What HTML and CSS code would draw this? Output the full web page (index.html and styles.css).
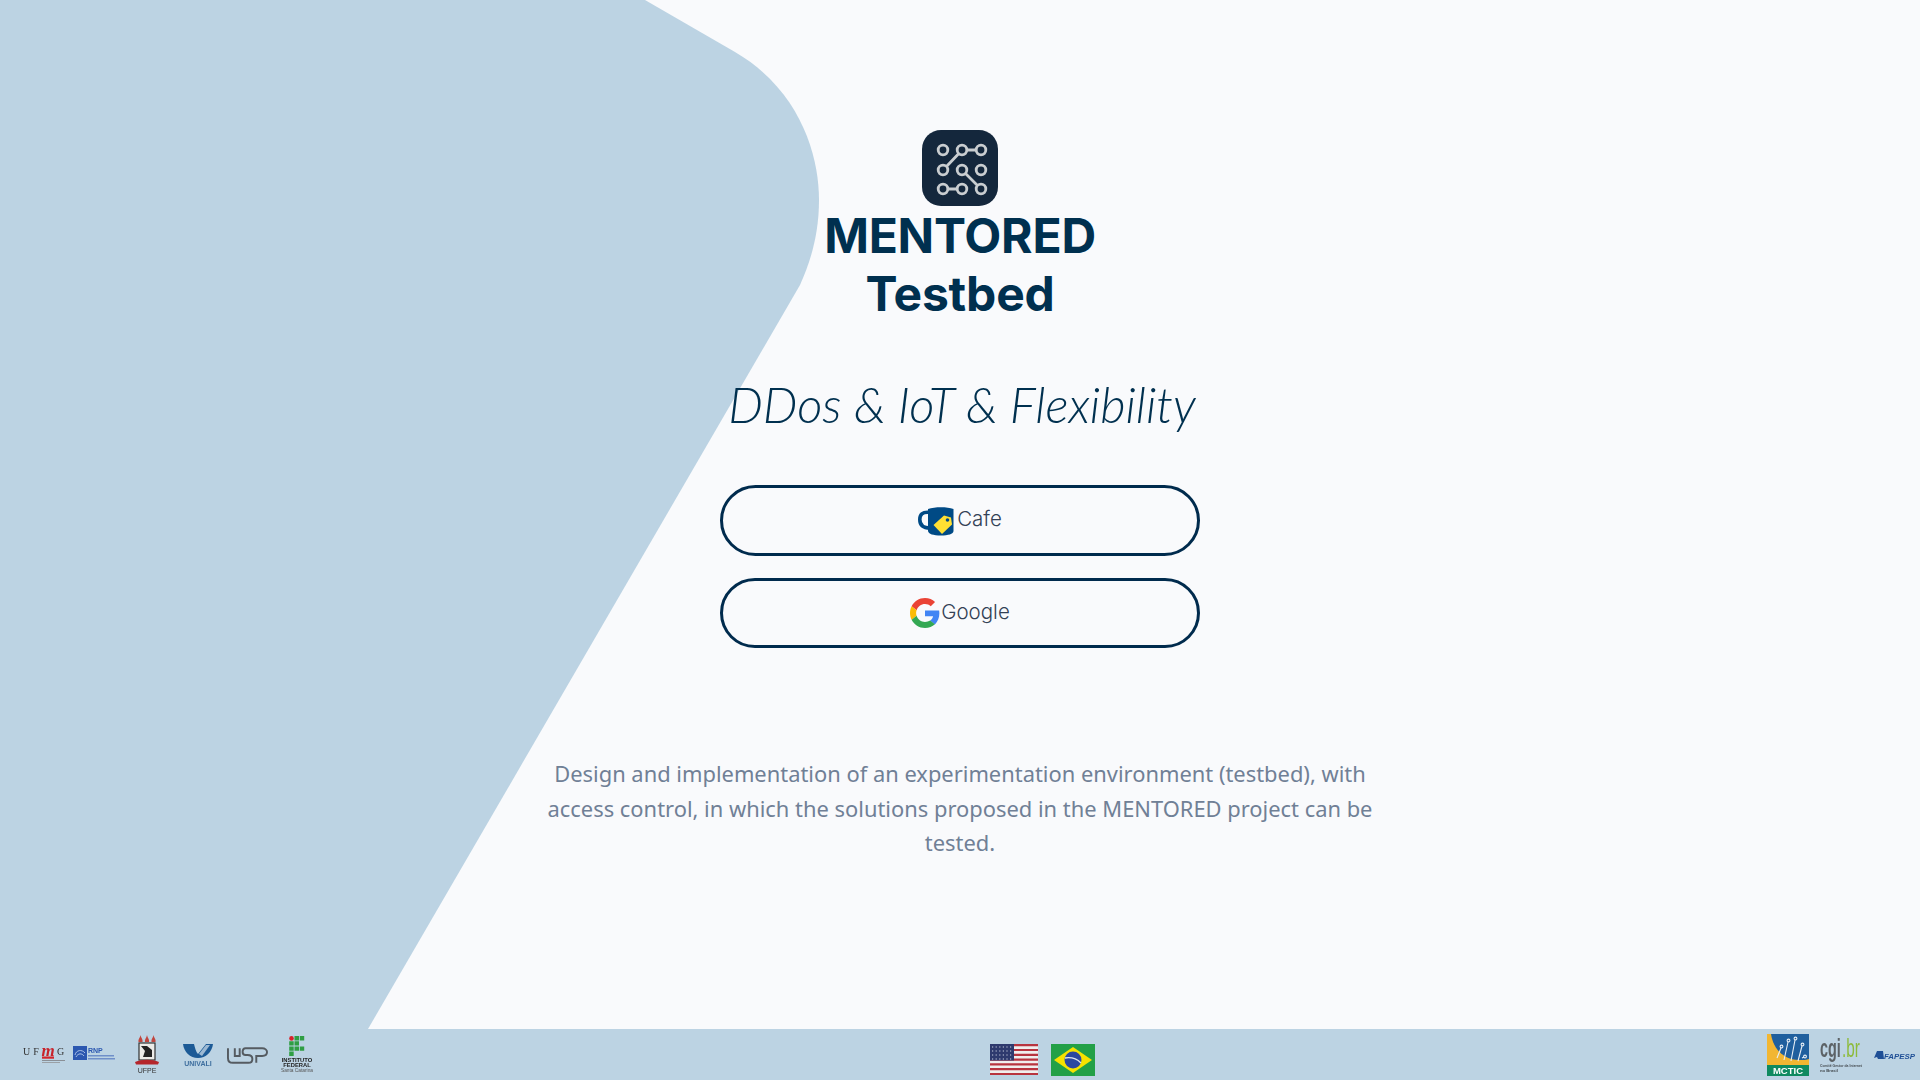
FILE: index.html
```html
<!DOCTYPE html>
<html lang="en">
<head>
    <meta charset="UTF-8">
    <title>MENTORED Testbed</title>
    <link rel="stylesheet" href="styles.css">
</head>
<body>
    <main class="stage">
        <svg class="blob" viewBox="0 0 830 1029" width="830" height="1029">
            <path d="M0 0H645L735 52C800 90 819 155 819 200C819 235 810 263 800 285L368 1029H0Z" fill="#bcd3e3"/>
        </svg>

        <div class="content">
            <svg class="app-logo" viewBox="0 0 76 76" width="76" height="76">
                <rect width="76" height="76" rx="19" fill="#14273c"/>
                <g fill="none" stroke="#c9cdd0" stroke-width="2.800">
                    <path d="M45 20H54M36.800 23.500L24.500 36.500M43.500 43.500L55.500 55.500M26 59H35"/>
                    <circle cx="21" cy="20" r="4.800"/>
                    <circle cx="40" cy="20" r="4.800"/>
                    <circle cx="59" cy="20" r="4.800"/>
                    <circle cx="21" cy="40" r="4.800"/>
                    <circle cx="40" cy="40" r="4.800"/>
                    <circle cx="59" cy="40" r="4.800"/>
                    <circle cx="21" cy="59" r="4.800"/>
                    <circle cx="40" cy="59" r="4.800"/>
                    <circle cx="59" cy="59" r="4.800"/>
                </g>
            </svg>
            <h1 class="title">MENTORED<br>Testbed</h1>
            <h2 class="tagline">DDos &amp; IoT &amp; Flexibility</h2>

            <a class="login-btn">
                <svg class="cafe-icon" viewBox="0 0 36 30" width="36" height="30">
                    <path d="M12 6.500C4 5.500 1.800 9 1.800 13.500C1.800 19 5 22 12 22" fill="none" stroke="#004a85" stroke-width="3.600"/>
                    <path d="M10 3C17 0.500 29 0.500 35.500 3V25C35.500 28 30 29.500 23 29.500C15 29.500 10.500 28 10 25Z" fill="#004a85"/>
                    <path d="M15.500 19L26 9.500L33 11.500L34 18.500L24 28Z" fill="#ffe033"/>
                    <circle cx="29.500" cy="14" r="1.800" fill="#004a85"/>
                </svg>
                <span>Cafe</span>
            </a>
            <a class="login-btn">
                <svg class="google-icon" viewBox="0 0 48 48" width="30" height="30">
                    <path fill="#EA4335" d="M24 9.500c3.540 0 6.710 1.220 9.210 3.600l6.850-6.850C35.900 2.380 30.470 0 24 0 14.620 0 6.510 5.380 2.560 13.220l7.980 6.190C12.430 13.720 17.740 9.500 24 9.500z"/>
                    <path fill="#4285F4" d="M46.980 24.550c0-1.570-.15-3.090-.38-4.550H24v9.020h12.940c-.58 2.960-2.260 5.480-4.780 7.180l7.730 6c4.510-4.180 7.090-10.360 7.090-17.650z"/>
                    <path fill="#FBBC05" d="M10.530 28.590c-.48-1.450-.76-2.990-.76-4.590s.27-3.140.76-4.590l-7.980-6.190C.92 16.460 0 20.120 0 24c0 3.880.92 7.540 2.560 10.780l7.970-6.190z"/>
                    <path fill="#34A853" d="M24 48c6.480 0 11.930-2.130 15.890-5.810l-7.730-6c-2.150 1.450-4.920 2.300-8.160 2.300-6.260 0-11.570-4.220-13.470-9.910l-7.980 6.190C6.510 42.620 14.620 48 24 48z"/>
                </svg>
                <span>Google</span>
            </a>

            <p class="about">Design and implementation of an experimentation environment (testbed), with access control, in which the solutions proposed in the MENTORED project can be tested.</p>
        </div>
    </main>

    <footer class="footer">
        <div class="partners">
            <svg class="partner ufmg" viewBox="0 0 44 18" width="44" height="18">
                <text x="1" y="9" font-size="10" letter-spacing="3" fill="#333" font-family="Liberation Serif, serif">UF</text>
                <text x="19.500" y="9.500" font-size="17" font-style="italic" font-weight="700" fill="#c8222a" font-family="Liberation Serif, serif">m</text>
                <text x="35" y="9" font-size="10" fill="#333" font-family="Liberation Serif, serif">G</text>
                <rect x="20" y="10.500" width="12" height="2.200" fill="#d4242b"/>
                <rect x="20" y="14" width="23" height="1" fill="#8a8f96"/>
                <rect x="20" y="16" width="18" height="1" fill="#9aa0a6"/>
            </svg>
            <svg class="partner rnp" viewBox="0 0 42 18" width="42" height="18">
                <rect width="14" height="14" fill="#2b57b0"/>
                <path d="M2 9C3 4 9 3 12 7M3 11C5 7 9 7 11 10" fill="none" stroke="#a9c0e6" stroke-width="1"/>
                <text x="15" y="6.500" font-size="7" font-weight="700" fill="#2b57b0" font-family="Liberation Sans, sans-serif">RNP</text>
                <rect x="15" y="9" width="26" height="1.500" fill="#6f8fc9"/>
                <rect x="15" y="12" width="27" height="1.500" fill="#6f8fc9"/>
            </svg>
            <svg class="partner ufpe" viewBox="0 0 24 40" width="24" height="40">
                <path d="M3.500 7C3 4 5 3 5.500 0C6 3 8 4 7.500 7ZM10 7C9.500 4 11.500 3 12 0C12.500 3 14.500 4 14 7ZM16.500 7C16 4 18 3 18.500 0C19 3 21 4 20.500 7Z" fill="#c0463f"/>
                <rect x="4" y="8" width="16" height="17" fill="#ecebe8" stroke="#333" stroke-width="1.200"/>
                <path d="M6 11H12L17 15V22H8L10 16Z" fill="#222"/>
                <path d="M0 27C7 24 17 24 24 27L23 29.500H1Z" fill="#b5262c"/>
                <text x="12" y="38" text-anchor="middle" font-size="7" fill="#333" font-family="Liberation Sans, sans-serif">UFPE</text>
            </svg>
            <svg class="partner univali" viewBox="0 0 34 22" width="34" height="22">
                <path d="M2 0H13C14 4 15 8 17 10L25 0H32C31 8 25 14 17 14C9 14 3 8 2 0Z" fill="#1c5a96"/>
                <path d="M18 10L25 1H29L21 12Z" fill="#9db9d3"/>
                <text x="17" y="21.500" text-anchor="middle" font-size="7" font-weight="700" fill="#3f6f9f" font-family="Liberation Sans, sans-serif">UNIVALI</text>
            </svg>
            <svg class="partner usp" viewBox="0 0 42 18" width="41" height="18">
                <path d="M1 2V12C1 16 3 17 6 17H22C25 17 26 15 26 13C26 10 24 9 21 9H19C17 9 16 8 16 6C16 4 17 2 19 2H36C39 2 41 4 41 6C41 9 39 10 36 10H30V17M8 2V10H13V2" fill="none" stroke="#555b61" stroke-width="2"/>
            </svg>
            <svg class="partner ifsc" viewBox="0 0 32 37" width="32" height="37">
                <circle cx="10.500" cy="2.400" r="2.300" fill="#d8232a"/>
                <path d="M13.500 0H18V4.400H13.500ZM18.800 0H23.200V4.400H18.800ZM8.200 5.200H12.700V9.600H8.200ZM13.500 5.200H18V9.600H13.500ZM8.200 10.400H12.700V14.800H8.200ZM13.500 10.400H18V14.800H13.500ZM18.800 10.400H23.200V14.800H18.800ZM8.200 15.600H12.700V20H8.200Z" fill="#2f9e44"/>
                <text x="16" y="26" text-anchor="middle" font-size="5.800" font-weight="700" fill="#222" font-family="Liberation Sans, sans-serif">INSTITUTO</text>
                <text x="16" y="31" text-anchor="middle" font-size="5.800" font-weight="700" fill="#222" font-family="Liberation Sans, sans-serif">FEDERAL</text>
                <text x="16" y="36" text-anchor="middle" font-size="4.800" fill="#555" font-family="Liberation Sans, sans-serif">Santa Catarina</text>
            </svg>
        </div>

        <div class="flags">
            <svg class="flag-us" viewBox="0 0 48 31" width="48" height="31">
                <rect width="48" height="31" fill="#f0eeee"/>
                <path d="M0 1.200H48M0 6H48M0 10.800H48M0 15.600H48M0 20.400H48M0 25.200H48M0 30H48" stroke="#b8343f" stroke-width="2.200"/>
                <rect width="24" height="16.500" fill="#2e3a6e"/>
                <path d="M2 3H22M2 7H22M2 11H22M2 15H22" stroke="#c8cede" stroke-width="1.200" stroke-dasharray="1.200 2.400"/>
            </svg>
            <svg class="flag-br" viewBox="0 0 44 32" width="44" height="32">
                <rect width="44" height="32" fill="#22a047"/>
                <path d="M22 3L41 16L22 29L3 16Z" fill="#f6e200"/>
                <circle cx="22" cy="16" r="8.500" fill="#2b48a0"/>
                <path d="M14 14C20 13 26 15 30 19" fill="none" stroke="#dfe6ee" stroke-width="1.300"/>
            </svg>
        </div>

        <div class="partners partners-right">
            <svg class="partner mctic" viewBox="0 0 42 42" width="42" height="42">
                <rect width="42" height="42" fill="#f2b632"/>
                <path d="M4 0H42V25C40 26 36 26 32 26C16 26 6 14 4 0Z" fill="#1f5f9e"/>
                <rect y="31" width="42" height="11" fill="#0f8a5f"/>
                <g fill="none" stroke="#e6eef5" stroke-width="1.100">
                    <path d="M10 24L14 14M17 26L21 8M24 27L28 6M31 27L35 12M35 24L37 23"/>
                    <circle cx="14.500" cy="12.500" r="1.400"/>
                    <circle cx="21.500" cy="6.500" r="1.400"/>
                    <circle cx="28.500" cy="4.500" r="1.400"/>
                    <circle cx="35.500" cy="10.500" r="1.400"/>
                    <circle cx="38" cy="22.500" r="1.400"/>
                </g>
                <text x="21" y="40" text-anchor="middle" font-size="9.500" font-weight="700" fill="#fff" font-family="Liberation Sans, sans-serif">MCTIC</text>
            </svg>
            <svg class="partner cgi" viewBox="0 0 43 36" width="43" height="36">
                <text transform="translate(0 20) scale(0.8 1.4)" font-size="18" font-weight="700" fill="#5c6266" font-family="Liberation Sans, sans-serif">cgi</text>
                <text transform="translate(22 20) scale(0.85 1.4)" font-size="18" fill="#8dbb3c" font-family="Liberation Sans, sans-serif">.br</text>
                <text x="0" y="30" font-size="4.200" font-weight="700" fill="#444a4f" font-family="Liberation Sans, sans-serif" textLength="42" lengthAdjust="spacingAndGlyphs">Comitê Gestor da Internet</text>
                <text x="0" y="35" font-size="4.200" font-weight="700" fill="#444a4f" font-family="Liberation Sans, sans-serif">no Brasil</text>
            </svg>
            <svg class="partner fapesp" viewBox="0 0 42 16" width="42" height="16">
                <path d="M0 11L3 4H9L10 12H4L3 10Z" fill="#1f4f96"/>
                <text x="10" y="12" font-size="8" font-style="italic" font-weight="700" fill="#1f4f96" font-family="Liberation Sans, sans-serif" textLength="31" lengthAdjust="spacingAndGlyphs">FAPESP</text>
            </svg>
        </div>
    </footer>
</body>
</html>
```

FILE: styles.css
```css
* {
    box-sizing: border-box;
}

body {
    margin: 0;
    height: 1080px;
    overflow: hidden;
    display: flex;
    flex-direction: column;
    background-color: #f9fafc;
    font-family: "Lato", "Open Sans", sans-serif;
}

.stage {
    position: relative;
    height: 1029px;
    flex-shrink: 0;
}

.blob {
    position: absolute;
    top: 0;
    left: 0;
    display: block;
}

.content {
    position: relative;
    display: flex;
    flex-direction: column;
    align-items: center;
    padding-top: 130px;
}

.app-logo {
    display: block;
    margin-bottom: 1px;
}

.title {
    margin: 0;
    font-family: "Inter", sans-serif;
    font-size: 48px;
    line-height: 58px;
    font-weight: 700;
    letter-spacing: -0.2px;
    color: #00304f;
    text-align: center;
}

.tagline {
    margin: 52px 0 0;
    padding-left: 4px;
    font-size: 49px;
    line-height: 58px;
    font-weight: 300;
    font-style: italic;
    color: #00304f;
}

.login-btn {
    width: 480px;
    height: 70.500px;
    margin-top: 22px;
    display: flex;
    align-items: center;
    justify-content: center;
    gap: 1px;
    border: 3px solid #002b4d;
    border-radius: 36px;
    font-family: "Inter", sans-serif;
    font-size: 20.500px;
    font-weight: 300;
    color: #334155;
}

.login-btn span {
    margin-bottom: 3px;
}

.cafe-icon {
    margin: 2px 2px 0 0;
}

.tagline + .login-btn {
    margin-top: 52px;
}

.about {
    width: 860px;
    margin: 109px 0 0;
    font-family: "Noto Sans", sans-serif;
    font-size: 21.900px;
    line-height: 34.500px;
    color: #708096;
    text-align: center;
}

.footer {
    flex: 1;
    display: flex;
    align-items: center;
    justify-content: space-between;
    padding: 0 4px 0 22px;
    background-color: #bcd3e3;
}

.partners {
    display: flex;
    align-items: center;
    gap: 7px;
}

.partners-right {
    gap: 11px;
}

.partner {
    display: block;
    overflow: visible;
    filter: blur(0.3px);
}

.rnp {
    margin-right: 13px;
}

.ufpe {
    margin-right: 15px;
}

.univali {
    margin-right: 5px;
}

.usp {
    margin-right: 6px;
}

.flags {
    display: flex;
    align-items: center;
    gap: 13px;
    margin: 10px 0 0 5px;
}
```
